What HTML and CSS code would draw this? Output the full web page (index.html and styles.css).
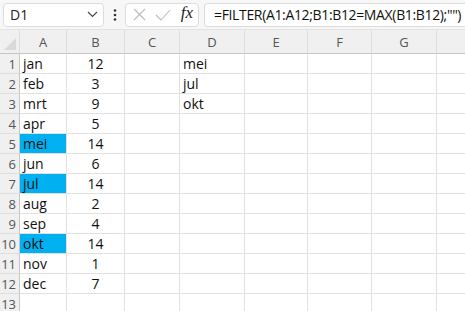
FILE: index.html
```html
<!DOCTYPE html>
<html lang="nl">

<head>
  <meta charset="UTF-8">
  <meta name="viewport" content="width=device-width, initial-scale=1.0">
  <title>FILTER</title>
  <link rel="stylesheet" href="styles.css">
</head>

<body>
  <div class="toolbar">
    <div class="name-box">
      <span>D1</span>
      <svg width="11" height="7" viewBox="0 0 11 7"><path d="M1 1l4.5 4.5L10 1" fill="none" stroke="#444" stroke-width="1.2"/></svg>
    </div>
    <div class="dots">
      <svg width="4" height="12" viewBox="0 0 4 12"><circle cx="2" cy="1.5" r="1.3" fill="#333"/><circle cx="2" cy="6" r="1.3" fill="#333"/><circle cx="2" cy="10.5" r="1.3" fill="#333"/></svg>
    </div>
    <div class="fx-box">
      <svg class="ic-x" width="13" height="13" viewBox="0 0 13 13"><path d="M1 1l11 11M12 1L1 12" stroke="#bdbdbd" stroke-width="1.1" fill="none"/></svg>
      <svg class="ic-ok" width="16" height="12" viewBox="0 0 16 12"><path d="M1 6l5 5L15 1" stroke="#bdbdbd" stroke-width="1.1" fill="none"/></svg>
      <span class="fx">fx</span>
    </div>
    <div class="formula">=FILTER(A1:A12;B1:B12=MAX(B1:B12);"")</div>
  </div>

  <div class="sheet" id="sheet">
    <div class="corner"><span class="tri"></span></div>
    <div class="col-head">A</div>
    <div class="col-head">B</div>
    <div class="col-head">C</div>
    <div class="col-head">D</div>
    <div class="col-head">E</div>
    <div class="col-head">F</div>
    <div class="col-head">G</div>
    <div class="col-head last"></div>
  </div>

  <script>
    const rows = [
      ["jan", 12, "mei"], ["feb", 3, "jul"], ["mrt", 9, "okt"], ["apr", 5, ""],
      ["mei", 14, ""], ["jun", 6, ""], ["jul", 14, ""], ["aug", 2, ""],
      ["sep", 4, ""], ["okt", 14, ""], ["nov", 1, ""], ["dec", 7, ""], ["", "", ""]
    ];
    const $sheet = document.getElementById("sheet");

    rows.forEach((r, i) => {
      const cells = [
        { cls: "row-head", text: i + 1 },
        { cls: r[1] === 14 ? "cell hl" : "cell", text: r[0] },
        { cls: "cell num", text: r[1] },
        { cls: "cell", text: "" },
        { cls: "cell", text: r[2] },
        { cls: "cell", text: "" },
        { cls: "cell", text: "" },
        { cls: "cell", text: "" },
        { cls: "cell last", text: "" }
      ];
      cells.forEach((c) => {
        const $d = document.createElement("div");
        $d.className = c.cls;
        $d.textContent = c.text;
        $sheet.appendChild($d);
      });
    });
  </script>
</body>

</html>
```

FILE: styles.css
```css
html {
  box-sizing: border-box;
  font-family: "Open Sans", "Liberation Sans", sans-serif;
}

*,
*:before,
*:after {
  box-sizing: inherit;
}

body {
  margin: 0;
  width: 465px;
  height: 311px;
  overflow: hidden;
  background: #fff;
}

/* barra de formulas */
.toolbar {
  display: flex;
  align-items: center;
  height: 30px;
  padding: 3px 0 3px 3px;
  background: #f7f7f7;
  border-bottom: 1px solid #e3e3e3;
}

.name-box,
.fx-box,
.formula {
  height: 24px;
  background: #fff;
  border: 1px solid #dcdcdc;
  border-radius: 4px;
  display: flex;
  align-items: center;
}

.name-box {
  width: 101px;
  padding: 0 5px 0 6px;
  justify-content: space-between;
  font-size: 14px;
  color: #222;
}

.dots {
  width: 21px;
  display: flex;
  justify-content: center;
  padding-top: 1px;
}

.fx-box {
  width: 74px;
  padding: 0 5px 0 7px;
}

.ic-x {
  margin-right: 9px;
}

.fx {
  margin-left: auto;
  font-family: "Liberation Serif", serif;
  font-style: italic;
  font-size: 17px;
  color: #222;
  margin-top: -3px;
}

.formula {
  flex: 1;
  margin-left: 5px;
  padding-left: 9px;
  border-right: none;
  border-radius: 4px 0 0 4px;
  font-size: 14px;
  letter-spacing: -0.35px;
  color: #111;
  white-space: nowrap;
}

/* hoja */
.sheet {
  display: grid;
  grid-template-columns: 20px 47px 58px 55px 65px 63px 64px 65px 1fr;
  grid-template-rows: 24px;
  grid-auto-rows: 20px;
}

.corner,
.col-head {
  background: #f0f0f0;
  border-bottom: 1px solid #c6c6c6;
  border-right: 1px solid #dedede;
}

.corner {
  position: relative;
}

.tri {
  position: absolute;
  right: 3px;
  bottom: 3px;
  width: 0;
  height: 0;
  border-left: 12px solid transparent;
  border-bottom: 12px solid #d9d9d9;
}

.col-head {
  font-size: 13px;
  color: #555;
  display: flex;
  align-items: center;
  justify-content: center;
  padding-top: 1px;
}

.col-head.last {
  border-right: none;
}

.row-head {
  background: #f0f0f0;
  border-right: 1px solid #c6c6c6;
  border-bottom: 1px solid #dedede;
  font-size: 13px;
  color: #555;
  display: flex;
  align-items: center;
  justify-content: flex-end;
  padding-right: 3px;
}

.cell {
  border-right: 1px solid #e1e1e1;
  border-bottom: 1px solid #e1e1e1;
  font-size: 14px;
  color: #111;
  display: flex;
  align-items: center;
  padding-left: 3px;
  white-space: nowrap;
}

.cell.num {
  justify-content: center;
  padding-left: 0;
}

.cell.last {
  border-right: none;
}

.cell.hl {
  background: #00b0f0;
}
```
